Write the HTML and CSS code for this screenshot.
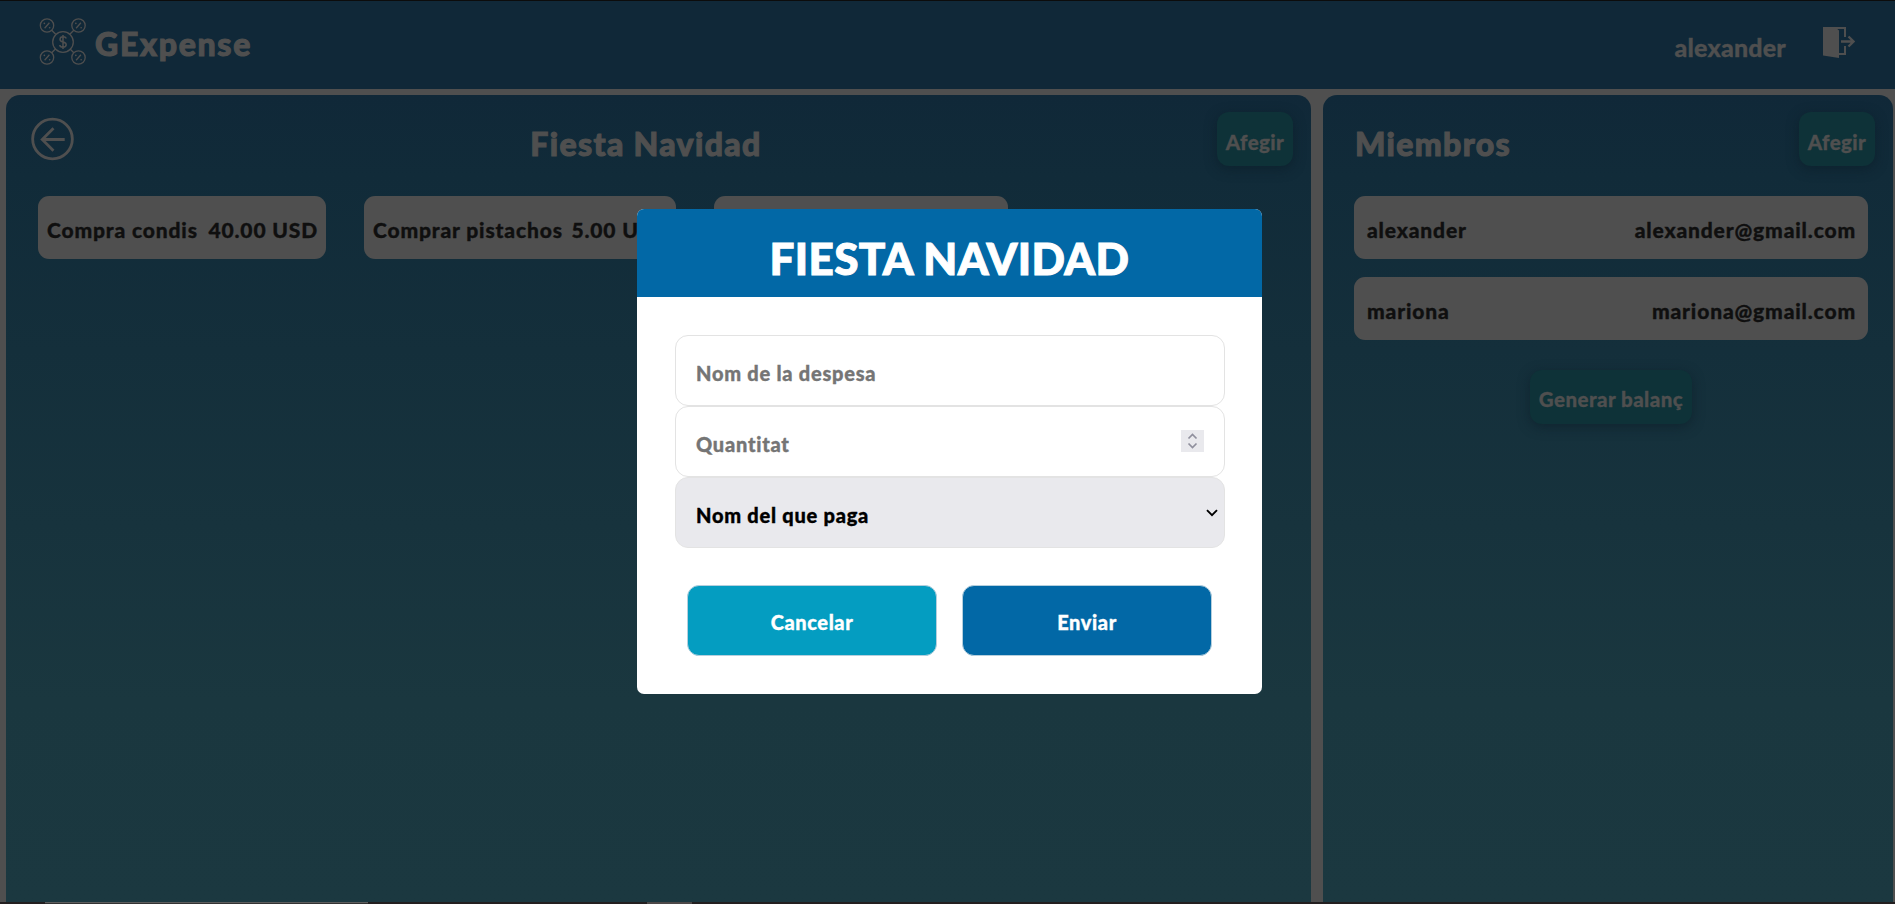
FILE: index.html
```html
<!DOCTYPE html>
<html lang="ca">
<head>
<meta charset="utf-8">
<title>GExpense</title>
<link rel="stylesheet" href="styles.css">
</head>
<body>
<header class="topbar">
  <div class="brand">
    <svg class="logo" viewBox="0 0 48 48" fill="none" stroke="currentColor" stroke-width="1.3">
      <circle cx="24" cy="24" r="10.3"/>
      <circle cx="8" cy="7.500" r="6.700"/><circle cx="39.500" cy="7.500" r="6.700"/>
      <circle cx="8" cy="39.500" r="6.700"/><circle cx="39.500" cy="39.500" r="6.700"/>
      <path d="M12.700 12.200l4 4M34.800 12.200l-4 4M12.700 34.800l4-4M34.800 34.800l-4-4"/>
      <path d="M5.600 10.200l4.800-5.400M37.100 10.200l4.800-5.400M5.600 42.200l4.800-5.400M37.100 42.200l4.800-5.400"/>
      <path stroke-width="1.600" stroke-linecap="round" d="M5.300 5.400h.1M10.600 9.700h.1M36.800 5.400h.1M42.100 9.700h.1M5.300 37.400h.1M10.600 41.700h.1M36.800 37.400h.1M42.100 41.700h.1"/>
      <path stroke-width="1.500" d="M27 20.600c0-1.300-1.200-1.800-2.900-1.800s-3.100.9-3.100 2.600c0 3.500 6.200 1.700 6.200 5.200 0 1.700-1.400 2.600-3.200 2.600s-3.200-.7-3.200-2.100M24 17v14"/>
    </svg>
    <span class="brand-name">GExpense</span>
  </div>
  <div class="session">
    <span class="user">alexander</span>
    <svg class="logout" viewBox="0 0 32 32" fill="none" stroke="currentColor">
      <path fill="currentColor" stroke="none" d="M0 0h12l4 3.500v27.500l-16-2.500z"/>
      <path stroke-width="2" d="M2 1h20v9M22 19v8h-6"/>
      <path stroke-width="2.300" d="M18 14.500h12M25.500 9.500l5 5-5 5"/>
    </svg>
  </div>
</header>
<main class="board">
  <section class="panel expenses">
    <div class="panel-head">
      <svg class="back" viewBox="0 0 44 44" fill="none" stroke="currentColor" stroke-width="2.900">
        <circle cx="22" cy="22" r="20.300"/>
        <path d="M34.500 22.500h-23M23 11l-11.500 11.500 11.500 11.500"/>
      </svg>
      <h1 class="heading">Fiesta Navidad</h1>
      <button class="action">Afegir</button>
    </div>
    <div class="expense-list">
      <div class="card expense first"><span>Compra condis</span><span>40.00 USD</span></div>
      <div class="card expense second"><span>Comprar pistachos</span><span>5.00 USD</span></div>
      <div class="card expense third"></div>
    </div>
  </section>
  <section class="panel members">
    <div class="panel-head">
      <h2 class="heading">Miembros</h2>
      <button class="action">Afegir</button>
    </div>
    <div class="member-list">
      <div class="card member"><span>alexander</span><span>alexander@gmail.com</span></div>
      <div class="card member"><span>mariona</span><span>mariona@gmail.com</span></div>
    </div>
    <button class="action balance">Generar balanç</button>
  </section>
</main>
<footer class="edge"><span class="edge-tab"></span><span class="edge-mark"></span></footer>
<div class="modal">
  <div class="modal-title">FIESTA NAVIDAD</div>
  <div class="form">
    <div class="field hint">Nom de la despesa</div>
    <div class="field hint">Quantitat
      <svg class="spinner" viewBox="0 0 23 22" fill="none" stroke="#8f8f9d" stroke-width="1.700"><path d="M7.500 8.500l4-4 4 4M7.500 13.500l4 4 4-4"/></svg>
    </div>
    <div class="field select">Nom del que paga
      <svg class="chevron" viewBox="0 0 12 8" fill="none" stroke="#000" stroke-width="1.900"><path d="M1 1.200l5 5 5-5"/></svg>
    </div>
    <div class="buttons">
      <button class="btn cancel">Cancelar</button>
      <button class="btn send">Enviar</button>
    </div>
  </div>
</div>
</body>
</html>
```
FILE: styles.css
```css
* { box-sizing: border-box; margin: 0; }
body {
  height: 904px; overflow: hidden; position: relative;
  display: flex; flex-direction: column;
  background: #4f4f4f; color: #4f4f4f;
  font-family: Lato, sans-serif; font-weight: 900;
  -webkit-text-stroke: .35px;
}
button { border: 0; font: inherit; color: inherit; -webkit-text-stroke: .35px; }
svg { display: block; flex: none; }

.topbar {
  height: 89px; flex: none; padding: 0 39px 0 39px;
  display: flex; justify-content: space-between;
  background: #102838; border-top: 1px solid #0c0c0c;
}
.brand, .session { display: flex; }
.logo { width: 48px; height: 48px; margin-top: 17px; }
.brand-name {
  margin-left: 8px; font-size: 32px; line-height: 86px;
  letter-spacing: 1.7px; -webkit-text-stroke: 1.1px;
}
.user { font-size: 25px; line-height: 93px; letter-spacing: .2px; }
.logout { width: 32px; height: 32px; margin: 26px 1px 0 37px; }

.board { height: 813px; flex: none; display: flex; gap: 12px; padding: 6px 2px 0 6px; }
.panel {
  border-radius: 14px 14px 0 0;
  background: linear-gradient(#102838, #112b39 10%, #1a373f 75%, #1b3840);
}
.expenses { width: 1305px; }
.members { flex: 1; display: flex; flex-direction: column; }
.panel-head { height: 101px; display: flex; justify-content: space-between; }
.expenses .panel-head { padding: 17px 18px 0 25px; }
.members .panel-head { padding: 17px 18px 0 32px; }
.back { width: 43px; height: 44px; margin-top: 5px; }
.heading {
  font-size: 32px; font-weight: 900; line-height: 64px;
  letter-spacing: 1.35px; -webkit-text-stroke: 1.1px;
}
.expenses .heading { margin-left: 1px; }
.action {
  width: 76px; height: 54px; padding: 5px 0 0; border-radius: 12px;
  font-size: 20.5px; letter-spacing: .4px; white-space: nowrap;
  background: #0e3238; box-shadow: 0 3px 12px rgba(10, 25, 35, .5);
}
.expense-list { display: flex; gap: 38px; padding-left: 32px; }
.card {
  height: 63px; border-radius: 11px; background: #4f4f4f; color: #0f0f0f;
  font-size: 21px; line-height: 67px; letter-spacing: .85px; white-space: nowrap;
  display: flex; justify-content: space-between;
}
.expense { padding: 0 8px 0 9px; }
.first { width: 288px; }
.second { width: 312px; }
.third { width: 294px; }
.member-list { padding: 0 25px 0 31px; display: grid; gap: 18px; }
.member { padding: 0 12px 0 13px; }
.balance { width: 162px; margin: 30px 0 0 207px; padding-top: 3px; letter-spacing: .45px; }

.edge { height: 2px; display: flex; background: #231f20; }
.edge-tab { width: 323px; margin-left: 45px; border-top: 1px solid #5d5d5d; background: #333; }
.edge-mark { width: 45px; margin-left: 279px; background: #4c4848; }

.modal {
  position: absolute; left: 637px; top: 209px; width: 625px; height: 485px;
  border-radius: 7px; overflow: hidden; background: #fff; color: #fff;
}
.modal-title {
  height: 88px; background: #0268a6; text-align: center;
  font-size: 44px; line-height: 99px;
  letter-spacing: .4px; -webkit-text-stroke: 1px;
}
.form { padding: 38px 37px 0 38px; }
.field {
  height: 71px; padding: 4px 20px 0; border: 1px solid #e3e3e3; border-radius: 13px;
  display: flex; align-items: center; justify-content: space-between;
  font-size: 20px; letter-spacing: .75px;
}
.hint { color: #757575; }
.select { background: #e9e9ed; color: #000; padding-right: 6px; }
.spinner { width: 23px; height: 22px; margin-top: -5px; background: #e9e9ed; }
.chevron { width: 12px; height: 8px; margin-top: -4px; }
.buttons { display: flex; gap: 25px; padding: 37px 0 0 12px; }
.btn {
  width: 250px; height: 71px; padding: 3px 0 0; border: 1px solid #b5cfdd;
  border-radius: 12px; font-size: 20px; letter-spacing: .6px;
}
.cancel { background: #049dc1; }
.send { background: #0268a6; }
```
